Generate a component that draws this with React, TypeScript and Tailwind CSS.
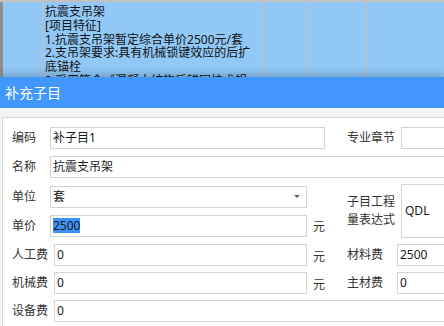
const font = "font-['Noto_Sans','Noto_Sans_CJK_SC',sans-serif]";

const Field = ({ w, value, children }: { w: string; value?: string; children?: React.ReactNode }) => (
  <div className={`${w} h-[22px] shrink-0 border border-[#d3d3d3] bg-white flex items-center pl-[2px] text-[12px] text-[#1a1a1a]`}>
    {children ?? value}
  </div>
);

const Label = ({ w, text }: { w: string; text: string }) => (
  <div className={`${w} shrink-0 text-[12px] text-[#333]`}>{text}</div>
);

const Yuan = () => <div className="ml-[6px] w-[12px] text-[12px] text-[#333] pt-[3px]">元</div>;

const App = () => {
  const lines = [
    "抗震支吊架",
    "[项目特征]",
    "1.抗震支吊架暂定综合单价2500元/套",
    "2.支吊架要求:具有机械锁键效应的后扩",
    "底锚栓",
    "3.采用符合《混凝土结构后锚固技术规",
  ];

  return (
    <div className={`w-[444px] h-[326px] overflow-hidden bg-white ${font}`}>
      {/* table row behind the dialog */}
      <div className="h-[77px] flex border-t-2 border-[#c2c2c2] bg-[#91c8f6] overflow-hidden">
        <div className="w-[3px] bg-[#8e8e8e]" />
        <div className="w-[40px] border-r border-[#c0c0c0]" />
        <div className="w-[220px] border-r border-[#c0c0c0] pl-[2px] pt-[3px] text-[12px] leading-[13.75px] text-[#111] whitespace-nowrap">
          {lines.map((l, i) => (
            <span key={l}>
              {l}
              {i < lines.length - 1 && <br />}
            </span>
          ))}
        </div>
        <div className="w-[46px] border-r border-[#c0c0c0]" />
        <div className="w-[58px] border-r border-[#c0c0c0]" />
        <div className="flex-1" />
      </div>

      {/* dialog */}
      <div className="relative z-10 shadow-[0_-4px_7px_rgba(0,0,0,0.18)]">
        <div className="h-[31px] bg-[#4297fe] flex items-center pl-[5px] text-[14px] text-white">补充子目</div>
        <div className="bg-[#f3f3f3] pt-[9px] pl-[2px] h-[220px]">
          <div className="w-[520px] bg-white border border-[#d9d9d9] pl-[9px] pt-[9px] pb-[10px]">
            {/* 编码 */}
            <div className="flex items-center">
              <Label w="w-[38px]" text="编码" />
              <Field w="w-[275px]" value="补子目1" />
              <div className="ml-[22px] w-[54px] text-[12px] text-[#333]">专业章节</div>
              <Field w="w-[100px]" />
            </div>

            {/* 名称 */}
            <div className="flex items-center mt-[7px]">
              <Label w="w-[38px]" text="名称" />
              <Field w="w-[420px]" value="抗震支吊架" />
            </div>

            {/* 单位 / 单价 + 表达式 */}
            <div className="flex items-center mt-[6px]">
              <div className="w-[313px] flex flex-col gap-[7px]">
                <div className="flex items-center">
                  <Label w="w-[38px]" text="单位" />
                  <Field w="w-[257px]">
                    <span className="flex-1">套</span>
                    <span className="mr-[6px] w-0 h-0 border-l-[3px] border-r-[3px] border-t-[3px] border-l-transparent border-r-transparent border-t-[#666]" />
                  </Field>
                </div>
                <div className="flex items-center">
                  <Label w="w-[38px]" text="单价" />
                  <Field w="w-[257px]">
                    <span className="bg-[#3f91f8] leading-[15px]">2500</span>
                  </Field>
                  <Yuan />
                </div>
              </div>
              <div className="ml-[22px] w-[54px] text-[12px] leading-[18px] text-[#333]">
                <div>子目工程</div>
                <div>量表达式</div>
              </div>
              <div className="w-[60px] h-[54px] border border-[#d3d3d3] flex items-center pl-[3px] text-[12px] text-[#1a1a1a]">
                QDL
              </div>
            </div>

            {/* 人工费 / 材料费 */}
            <div className="flex items-center mt-[6px]">
              <Label w="w-[42px]" text="人工费" />
              <Field w="w-[253px]" value="0" />
              <Yuan />
              <div className="ml-[22px] w-[50px] text-[12px] text-[#333]">材料费</div>
              <Field w="w-[100px]" value="2500" />
            </div>

            {/* 机械费 / 主材费 */}
            <div className="flex items-center mt-[6px]">
              <Label w="w-[42px]" text="机械费" />
              <Field w="w-[253px]" value="0" />
              <Yuan />
              <div className="ml-[22px] w-[50px] text-[12px] text-[#333]">主材费</div>
              <Field w="w-[100px]" value="0" />
            </div>

            {/* 设备费 */}
            <div className="flex items-center mt-[6px]">
              <Label w="w-[42px]" text="设备费" />
              <Field w="w-[420px]" value="0" />
            </div>
          </div>
        </div>
      </div>
    </div>
  );
};

export default App;
